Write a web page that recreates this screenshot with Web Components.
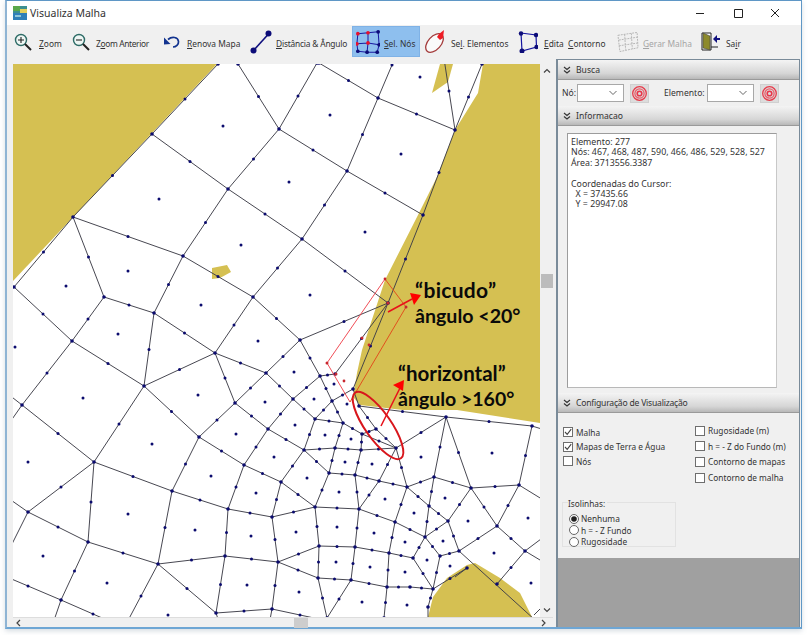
<!DOCTYPE html>
<html lang="pt"><head><meta charset="utf-8"><title>Visualiza Malha</title>
<style>
html,body{margin:0;padding:0;background:#fff;font:9px "Noto Sans","Liberation Sans",sans-serif;color:#222}
body{width:808px;height:635px;overflow:hidden}
</style></head><body>
<app-window>
  <title-bar title="Visualiza Malha"></title-bar>
  <tool-bar>
    <tool-btn style="--l:7px;--iw:18px;--g:7px;--tw:23px" label="Zoom" u="0"><svg slot="icon" width="18" height="18" viewBox="0 0 18 18"><circle cx="7" cy="7" r="5.5" fill="#eef6f4" stroke="#2d6b66" stroke-width="1.4"/><path d="M7 4v6M4 7h6" stroke="#222" stroke-width="1.1"/><path d="M11 11l6 6" stroke="#222" stroke-width="2"/></svg></tool-btn>
    <tool-btn style="--l:10px;--iw:18px;--g:6px;--tw:56px;--ls:-.35px" label="Zoom Anterior" u="1"><svg slot="icon" width="18" height="18" viewBox="0 0 18 18"><circle cx="7" cy="7" r="5.5" fill="#eef6f4" stroke="#2d6b66" stroke-width="1.4"/><path d="M4 7h6" stroke="#222" stroke-width="1.1"/><path d="M11 11l6 6" stroke="#222" stroke-width="2"/></svg></tool-btn>
    <tool-btn style="--l:11px;--iw:18px;--g:6px;--tw:54px" label="Renova Mapa" u="0"><svg slot="icon" width="18" height="14" viewBox="0 0 18 14"><path d="M5 4.5C9 1 15 2 15.5 6.5 15.8 9.5 13 12 10 12" fill="none" stroke="#12338f" stroke-width="1.7"/><path d="M1 2.500 L7.500 9 L1 9.500Z" fill="#12338f"/></svg></tool-btn>
    <tool-btn style="--l:9px;--iw:23px;--g:3px;--tw:73px;--ls:-.2px" label="Distância &amp; Ângulo" u="0"><svg slot="icon" width="23" height="24" viewBox="0 0 23 24"><path d="M3.500 20.500L18.500 4" stroke="#10107e" stroke-width="1.6"/><circle cx="3.500" cy="20.500" r="3" fill="#0c0c78"/><circle cx="18.500" cy="3.500" r="3" fill="#0c0c78"/></svg></tool-btn>
    <tool-btn selected style="--l:3px;--iw:32px;--g:0px;--tw:36px" label="Sel. Nós" u="0"><svg slot="icon" width="24" height="24" viewBox="0 0 26 26" style="margin-left:4px;margin-right:4px"><g fill="none" stroke="#1a1aa0" stroke-width="1.100"><path d="M2 4L13 3L24 2M1 15L13 14L25 16M2 23L12 24L23 24M2 4L1 15L2 23M13 3L13 14L12 24M24 2L25 16L23 24"/></g><g fill="#0c0c78"><circle cx="24" cy="2" r="2"/><circle cx="25" cy="16" r="2"/><circle cx="2" cy="23" r="2"/><circle cx="12" cy="24" r="2"/><circle cx="23" cy="24" r="2"/></g><g fill="#e8102c"><circle cx="2" cy="4" r="2"/><circle cx="13" cy="3" r="2"/><circle cx="1" cy="15" r="2"/><circle cx="13" cy="14" r="2"/></g></svg></tool-btn>
    <tool-btn style="--l:5px;--iw:22px;--g:4px;--tw:58px" label="Sel. Elementos" u="2"><svg slot="icon" width="22" height="25" viewBox="0 0 22 25"><ellipse cx="9.500" cy="14" rx="11" ry="6.500" transform="rotate(-48 9.500 14)" fill="#fafafa" stroke="#a33a3a" stroke-width="1.300"/><path d="M14 5l5-4-1 8-3 2-3-3z" fill="#ee1c24"/></svg></tool-btn>
    <tool-btn style="--l:9px;--iw:20px;--g:6px;--tw:63px" label="Edita  Contorno" us="0,7"><svg slot="icon" width="20" height="22" viewBox="0 0 20 22"><path d="M3 2L18 4L18.500 16L4 20Z" fill="none" stroke="#1414a0" stroke-width="1.200"/><g fill="#0c0c78"><circle cx="3" cy="2.500" r="2.200"/><circle cx="18" cy="4" r="2.200"/><circle cx="18.500" cy="16" r="2.200"/><circle cx="4" cy="20" r="2.500"/></g></svg></tool-btn>
    <tool-btn disabled style="--l:10px;--iw:22px;--g:4px;--tw:46px" label="Gerar Malha" u="0"><svg slot="icon" width="23" height="22" viewBox="0 0 23 22"><path d="M1 4L21 1L22 17L3 21ZM8 3L9 19M15 2L16 18M2 9L21 6M2 15L22 12" fill="none" stroke="#b5b5b5" stroke-dasharray="2 1"/></svg></tool-btn>
    <tool-btn style="--l:12px;--iw:20px;--g:5px;--tw:15px" label="Sair" u="2"><svg slot="icon" width="20" height="19" viewBox="0 0 20 19"><path d="M1 1h9v17H1z" fill="#fff" stroke="#222"/><path d="M2 1l7 3v14l-7-2z" fill="#8d8a2c" stroke="#444" stroke-width=".6"/><path d="M19 6h-3V3l-4 4 4 4V8h3z" fill="#10107e"/><path d="M10 15h7" stroke="#222"/></svg></tool-btn>
  </tool-bar>
  <div style="display:grid;grid-template-columns:543px 1fr;flex:1;min-height:0">
    <map-view></map-view>
    <side-panel>
      <panel-header label="Busca"></panel-header>
      <busca-row></busca-row>
      <panel-header label="Informacao"></panel-header>
      <info-box>
        <div>Elemento: 277</div><div>Nós: 467, 468, 487, 590, 466, 486, 529, 528, 527</div><div>Área: 3713556.3387</div><div>&nbsp;</div><div>Coordenadas do Cursor:</div><div>&nbsp;&nbsp;X = 37435.66</div><div>&nbsp;&nbsp;Y = 29947.08</div>
      </info-box>
      <panel-header label="Configuração de Visualização" style="--ls:-.22px"></panel-header>
      <config-box></config-box>
    </side-panel>
  </div>
</app-window>
<script>
const def=(name,html,init)=>{customElements.define(name,class extends HTMLElement{constructor(){super();this.attachShadow({mode:'open'}).innerHTML=typeof html==='function'?html(this):html;}connectedCallback(){if(init)init(this,this.shadowRoot)}})};

def('app-window',`<style>:host{display:flex;flex-direction:column;box-sizing:border-box;width:797px;height:629px;margin-left:5px;border:solid #8fb4d4;border-width:1px 1px 2px 2px;border-top-color:#5f97c6;border-bottom-color:#6ea6d4;border-right-color:#5f97c6;background:#f0f0f0;box-shadow:0 2px 5px rgba(120,140,160,.3)}</style><slot></slot>`);

def('title-bar',`<style>:host{display:flex;align-items:center;height:24px;background:#fff;flex:none;position:relative}
.t{font:10.500px "Noto Sans",sans-serif;color:#333;margin-left:3px}svg{margin-left:6px;flex:none}
.c{margin-left:auto;display:flex;align-items:center;height:24px}.c svg{margin:0;display:block}</style>
<svg width="14" height="14" viewBox="0 0 14 14"><rect width="14" height="14" fill="#3d8f8f"/><rect y="0" width="7" height="5" fill="#5aa84a"/><rect x="7" y="3" width="7" height="4" fill="#e3d05c"/><rect y="7" width="14" height="7" fill="#2f7fb8"/><rect x="2" y="9" width="6" height="2" fill="#8fc6d8"/></svg><span class="t"></span>
<span class="c"><svg width="38" height="24"><path d="M1 12.500h8" stroke="#222"/></svg><svg width="37" height="24"><path d="M1.500 8.500h8v8h-8z" fill="none" stroke="#222"/></svg><svg width="18" height="24" style="margin-right:13px"><path d="M1 8l8 8M9 8l-8 8" stroke="#222"/></svg></span>`,
(e,s)=>{s.querySelector('.t').textContent=e.getAttribute('title')});

def('tool-bar',`<style>:host{display:flex;align-items:flex-start;height:39px;background:#f0f0f0;flex:none;box-sizing:border-box;padding-top:1px}</style><slot></slot>`);

def('tool-btn',`<style>:host{display:flex;align-items:center;height:31px;margin-left:var(--l,0);flex:none;font:8.400px "Noto Sans",sans-serif;color:#333}
:host([selected]){background:#8ebfee;outline:1px solid #7fb2e6;outline-offset:-1px}
:host([disabled]){color:#a5a5a5}
.i{width:var(--iw);display:flex;justify-content:center;flex:none}.l{margin-left:var(--g);margin-top:3px;width:var(--tw);white-space:pre;letter-spacing:var(--ls,0)}
u{text-underline-offset:1px}</style><span class="i"><slot name="icon"></slot></span><span class="l"></span>`,
(e,s)=>{const t=e.getAttribute('label');const set=(e.getAttribute('us')||e.getAttribute('u')||'').split(',').map(Number);
 const l=s.querySelector('.l');[...t].forEach((c,i)=>{if(set.includes(i)){const u=document.createElement('u');u.textContent=c;l.append(u)}else l.append(c)})});

const chevLR=d=>`<svg width="8" height="8" viewBox="0 0 8 8"><path d="${d}" fill="none" stroke="#444" stroke-width="1.200"/></svg>`;

/* --------- mesh ---------- */
const N={A:[73,217],B:[152,134],C:[228,189],D:[279,129],E:[238,64],F:[183,256],G:[253,297],H:[104,297],I:[154,313],J:[14,287],K:[72,341],Tl:[218,64],
W:[317,63],Nn:[319,63],O:[378,98],Pp:[406,32],Q:[455,130],Qt:[443,52],R:[347,171],S:[423,215],T:[302,239],U:[388,303],V:[300,340],Ct:[482,64],
b:[144,386],c:[215,353],d:[266,373],e:[235,403],f:[199,437],g:[22,405],h:[94,462],i:[172,491],j:[244,465],k:[268,429],l:[228,509],m:[272,517],n:[28,512],o:[88,542],p:[158,564],q:[225,556],r:[278,562],s:[216,613],t:[272,609],u:[61,600],
A1:[320,376],A2:[293,399],A3:[315,419],A4:[343,423],A5:[304,450],A6:[281,482],B1:[335,374],B2:[353,389],C1:[332,401],D0:[359,406],F1:[376,429],G1:[362,434],G2:[361,450],H1:[335,448],E0:[396,448],
x1:[379,481],n2:[315,507],n4:[359,509],n5:[329,473],n6:[355,475],n7:[407,487],n8:[395,522],n9:[319,546],n10:[355,547],n11:[389,553],n12:[413,558],n14:[318,578],n15:[351,580],n16:[387,587],n17:[410,587],n19:[327,618],
X1:[446,417],X2:[532,426],X3:[471,488],X4:[519,485],X5:[434,477],X6:[497,526],X7:[448,521],X8:[429,506],X9:[425,537],X10:[525,551],X11:[459,551],X12:[440,556],X14:[433,589],X15:[467,568],X16:[428,607],X17:[497,584],
s1:[-5,572],s2:[124,628],s3:[125,628],s4:[328,621],s5:[384,618]};
const EDGES=`Tl-B B-A A-J J-K A-F A-H B-C C-D E-D C-F F-I F-G H-I H-K K-g K-b I-b I-c G-c C-T D-R D-W Nn-O O-Q O-Pp O-R Q-Qt R-S R-T T-U T-G G-V V-U V-A1 V-d c-d c-e c-b e-d e-f b-f e-k b-h g-h h-i f-i f-j j-k j-l i-l l-m m-r m-A6 m-n2 A6-j A6-A5 A6-n2 k-A5 k-A2 d-A2 A1-A2 A2-A3 A3-A5 A3-C1 A1-C1 C1-A4 C1-B2 U-B1 B1-A1 A3-A4 A4-G1 A4-H1 A5-H1 H1-G2 G2-E0 G1-G2 G1-F1 G1-E0 D0-F1 F1-E0 D0-X1 X1-X2 Ct-Q Q-S S-U U-B2 E0-x1 x1-n4 n6-x1 x1-n7 n5-n6 H1-n5 A5-n5 G2-n6 n5-n2 n6-n4 n2-n4 n4-n8 n7-n8 E0-n7 E0-X1 n8-X9 n8-n11 n4-n10 n2-n9 n9-n10 n10-n11 n11-n12 n12-X9 n12-X14 n11-n16 n10-n15 n9-n14 n14-n15 n15-n16 n16-n17 n17-X14 r-n9 r-n14 r-t n14-n19 n15-n19 n16-s5 t-s4 s-t q-s p-s p-q q-r l-q i-p o-p h-o h-n n-o o-u p-s2 u-s1 u-s3 X1-X3 X1-X5 X5-X8 X8-X9 X5-X3 X3-X4 X4-X2 X3-X6 X6-X4 X3-X7 X7-X8 X6-X11 X7-X11 X7-X9 X9-X12 X12-X14 X12-X11 X6-X10 X10-X17 X14-X15 X14-X16 X8-n7 X5-n7`.split(' ');
const STUBS=[[22,405,8,394],[22,405,8,425],[28,512,8,498],[28,512,8,552],[519,485,545,501],[525,551,545,536],[525,551,545,563],[532,426,545,430],[428,607,428,620],[459,551,535,620],[61,600,50,632],[272,609,269,625],[216,613,220,625],[534,615,542,607],[353,389,359,406],[467,568,455,577]];
const DOTS=[[223,126],[159,199],[241,245],[128,271],[66,286],[201,305],[118,334],[258,341],[15,347],[420,77],[330,115],[401,154],[289,182],[365,232],[310,295],[83,398],[152,444],[198,395],[265,402],[236,434],[274,457],[211,476],[256,493],[28,462],[128,514],[195,530],[251,536],[43,556],[107,583],[247,585],[168,615],[294,372],[314,399],[334,384],[347,404],[295,425],[325,435],[351,439],[307,478],[345,462],[372,464],[421,457],[492,453],[385,499],[339,492],[445,498],[414,513],[468,521],[528,518],[443,541],[494,553],[427,560],[450,566],[531,583],[296,532],[337,527],[374,533],[405,542],[336,562],[370,567],[405,572],[299,592],[362,602],[407,605]];
function meshSvg(){
 let l='',c='';
 for(const e of EDGES){const [a,b]=e.split('-').map(k=>N[k]);l+=`M${a}L${b}`;c+=`<circle cx="${(a[0]+b[0])/2}" cy="${(a[1]+b[1])/2}" r="1.500"/>`}
 for(const s of STUBS)l+=`M${s[0]},${s[1]}L${s[2]},${s[3]}`;
 const used=new Set(EDGES.flatMap(e=>e.split('-')));
 for(const k of used){const p=N[k];c+=`<circle cx="${p[0]}" cy="${p[1]}" r="1.800"/>`}
 for(const d of DOTS)c+=`<circle cx="${d[0]}" cy="${d[1]}" r="1.500"/>`;
 return `<svg width="527" height="553" viewBox="13 64 527 553">
 <g fill="#d5c052"><path d="M13 64H217L13 281Z"/><path d="M483 64H540V423L457 410H403L360 405L353 397L357 373L362 350L385 280L417 217L437 177L455 130L478 93Z"/><path d="M440 64H453L448 82L432 93Z"/><path d="M212 268L227 265L231 272L220 278L212 279Z"/><path d="M428 617L433 597L447 578L467 565L475 563L500 578L520 593L532 617Z"/></g>
 <path d="${l}" fill="none" stroke="#3d3d48" stroke-width=".95"/>
 <g fill="#0b0b6e">${c}</g>
 <g fill="none"><path d="M385 279L327 363L350 402" stroke="#ee3a44" stroke-width=".9"/><path d="M350 402L406 307L385 279" stroke="#e2501e" stroke-width="1"/></g>
 <g fill="#c8262e"><circle cx="385" cy="279" r="1.400"/><circle cx="406" cy="307" r="1.500"/><circle cx="327" cy="363" r="1.500"/><circle cx="336" cy="374" r="1.500"/><circle cx="344" cy="381" r="1.400"/><circle cx="362" cy="338" r="1.500"/><circle cx="369" cy="345" r="1.400"/><circle cx="388" cy="303" r="1.600"/></g>
 <ellipse cx="378" cy="425.500" rx="40" ry="13" transform="rotate(55 378 425.500)" fill="none" stroke="#d8161c" stroke-width="2"/>
 <path d="M388 312L412 299" stroke="#e8101a" stroke-width="1.500"/><path d="M421 295L410 293L414 305Z" fill="#f00"/>
 <path d="M381 426L400 388" stroke="#e8101a" stroke-width="1.500"/><path d="M404 380L393 385L403 391Z" fill="#f00"/>
 </svg>`;
}
def('map-view',()=>`<style>:host{display:grid;grid-template-columns:6px 527px 13px;grid-template-rows:553px 10px;background:#f0f0f0;width:546px;position:relative;margin-left:0}
.m{grid-column:2;grid-row:1;background:#fff;overflow:hidden;position:relative;height:553px;width:527px}svg{display:block}
.v{grid-column:3;grid-row:1;background:#f0f0f0;display:flex;flex-direction:column;align-items:center;justify-content:space-between;padding:3px 0}
.th{width:12px;height:14px;background:#bcbcbc;margin-bottom:120px}
.h{grid-column:2/4;grid-row:2;background:#f0f0f0;display:flex;align-items:center;border-top:1px solid #ddd;box-sizing:border-box;position:relative;padding:0 6px 0 2px;justify-content:space-between}
.tx{position:absolute;left:281px;top:0;width:14px;height:10px;background:#cdcdcd}
.lb{position:absolute;font:bold 19.600px/26px Lato,"Open Sans",sans-serif;color:#0a0a0a;white-space:nowrap}
</style><div class="m">${meshSvg()}
<span class="lb" style="left:402px;top:213px;font-size:21px;letter-spacing:.3px">“bicudo”</span><span class="lb" style="left:402px;top:239px">ângulo &lt;20°</span>
<span class="lb" style="left:385px;top:296px;font-size:20.500px">“horizontal”</span><span class="lb" style="left:385px;top:322px;font-size:19.500px">ângulo &gt;160°</span></div>
<div class="v">${chevLR('M1 5.500L4 2.500L7 5.500')}<div class="th"></div>${chevLR('M1 2.500L4 5.500L7 2.500')}</div>
<div class="h"><div class="tx"></div>${chevLR('M5 1L2 4L5 7')}${chevLR('M3 1L6 4L3 7')}</div>`);

def('side-panel',`<style>:host{display:flex;flex-direction:column;height:568px;margin-top:-5px;margin-left:6px;width:244px;box-sizing:border-box;border:solid #7a8b99;border-width:1px 1px 0 2px;background:#a0a0a0;position:relative}</style><slot></slot>`);

def('panel-header',`<style>:host{display:flex;align-items:center;height:20px;flex:none;background:linear-gradient(#f4f4f4,#d6d6d6 70%,#b8b8b8);border-bottom:1px solid #9a9a9a;box-sizing:border-box;font:8.600px "Noto Sans",sans-serif;color:#333;padding-left:5px;letter-spacing:var(--ls,0)}svg{margin-right:5px}</style>
<svg width="8" height="8" viewBox="0 0 8 8"><path d="M1 1L4 3.500L7 1M1 4.500L4 7L7 4.500" fill="none" stroke="#333" stroke-width="1.100"/></svg><span class="t"></span>`,
(e,s)=>{s.querySelector('.t').textContent=e.getAttribute('label')});

const target=`<svg width="15" height="15" viewBox="0 0 15 15" fill="none"><circle cx="7.500" cy="7.500" r="6.800" stroke="#e83a4a" stroke-width="1.300"/><circle cx="7.500" cy="7.500" r="4.600" stroke="#e8606c" stroke-width="1.300"/><circle cx="7.500" cy="7.500" r="2.300" stroke="#e8364a" stroke-width="1.600"/></svg>`;
const combo=`<span class="cb"><svg width="8" height="6" viewBox="0 0 8 6"><path d="M.5 1L4 4.500L7.500 1" fill="none" stroke="#666"/></svg></span>`;
def('busca-row',`<style>:host{display:flex;align-items:center;flex:none;height:26px;background:#f0f0f0;font:8.600px "Noto Sans",sans-serif;color:#333;box-sizing:border-box;padding-left:4px}
.cb{box-sizing:border-box;width:47px;height:18px;background:#fff;border:1px solid #a8a8a8;display:flex;align-items:center;justify-content:flex-end;padding-right:6px;flex:none}
.tb{width:19px;height:19px;background:#dcdcdc;border:1px solid #d0d0d0;box-sizing:border-box;display:flex;align-items:center;justify-content:center;flex:none;margin-left:6px}
</style><span style="width:15px">Nó:</span>${combo}<span class="tb">${target}</span><span style="margin-left:15px;width:43px">Elemento:</span>${combo}<span class="tb">${target}</span>`);

def('info-box',`<style>:host{display:block;flex:none;height:267px;background:#f0f0f0;box-sizing:border-box;padding:7px 22px 5px 9px}
.b{height:100%;box-sizing:border-box;background:#fff;border:1px solid #a0a0a0;border-color:#9c9c9c #c8c8c8 #b8b8b8 #9c9c9c;padding:3px 3px;font:8.800px/10.400px "Noto Sans",sans-serif;color:#333;white-space:nowrap}</style><div class="b"><slot></slot></div>`);

def('check-item',`<style>:host{display:flex;align-items:center;height:10px;white-space:nowrap}
.x{width:10px;height:10px;box-sizing:border-box;border:1px solid #6e6e6e;background:#fff;margin-right:3px;display:block;flex:none}</style>
<svg class="x" viewBox="0 0 8 8"></svg><span class="t"></span>`,
(e,s)=>{s.querySelector('.t').textContent=e.getAttribute('label');if(e.hasAttribute('on'))s.querySelector('.x').innerHTML='<path d="M1 4L3.200 6.300L7.200 1.200" fill="none" stroke="#444" stroke-width="1.100"/>'});

def('radio-item',`<style>:host{display:flex;align-items:center;height:11.500px;white-space:nowrap}svg{margin-right:2px;flex:none}</style><svg width="10" height="10" viewBox="0 0 10 10"><circle cx="5" cy="5" r="4.500" fill="#fff" stroke="#666"/></svg><span class="t"></span>`,
(e,s)=>{s.querySelector('.t').textContent=e.getAttribute('label');if(e.hasAttribute('on'))s.querySelector('svg').insertAdjacentHTML('beforeend','<circle cx="5" cy="5" r="2.800" fill="#222"/>')});

def('config-box',`<style>:host{display:grid;grid-template-columns:132px 1fr;flex:none;height:145px;background:#f0f0f0;font:8.300px "Noto Sans",sans-serif;color:#333;box-sizing:border-box;padding-left:5px;position:relative}
.l{display:flex;flex-direction:column;gap:4.500px;padding-top:14px}.r{display:flex;flex-direction:column;gap:5.700px;padding-top:12.500px}
.gr{position:absolute;left:4px;top:89px;width:114px;height:45px;box-sizing:border-box;border:1px solid #e2e2e2;padding:10px 0 0 6px}
.cap{position:absolute;left:5px;top:-5px;background:#f0f0f0;padding-right:2px}</style>
<div class="l"><check-item on label="Malha"></check-item><check-item on label="Mapas de Terra e Água"></check-item><check-item label="Nós"></check-item></div>
<div class="r"><check-item label="Rugosidade (m)"></check-item><check-item label="h = - Z do Fundo (m)"></check-item><check-item label="Contorno de mapas"></check-item><check-item label="Contorno de malha"></check-item></div>
<div class="gr"><span class="cap">Isolinhas:</span><radio-item on label="Nenhuma"></radio-item><radio-item label="h = - Z Fundo"></radio-item><radio-item label="Rugosidade"></radio-item></div>`);
</script>
</body></html>
